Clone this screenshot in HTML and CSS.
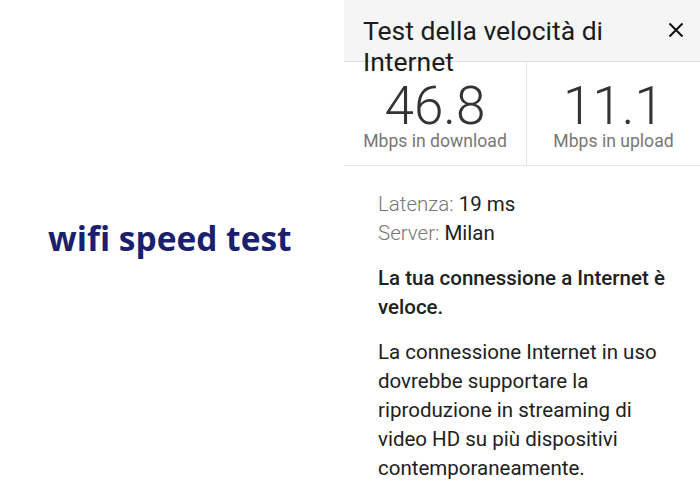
FILE: index.html
```html
<!DOCTYPE html>
<html lang="it">
<head>
  <meta charset="UTF-8">
  <title>Test della velocità di Internet</title>
  <link rel="stylesheet" href="styles.css">
</head>
<body>
  <div class="page">
    <div class="brand">wifi speed test</div>

    <div class="panel">
      <div class="panel-head">
        <h1 class="title">Test della velocità di Internet</h1>
        <button class="close" aria-label="Chiudi">
          <svg width="16" height="16" viewBox="0 0 16 16">
            <path d="M1.5 1.5 L14.5 14.5 M14.5 1.5 L1.5 14.5" stroke="#111" stroke-width="2" fill="none"/>
          </svg>
        </button>
      </div>

      <div class="stats">
        <div class="stat stat-down">
          <div class="stat-num">46.8</div>
          <div class="stat-label">Mbps in download</div>
        </div>
        <div class="stat">
          <div class="stat-num">11.1</div>
          <div class="stat-label">Mbps in upload</div>
        </div>
      </div>

      <div class="details">
        <div class="info"><span class="key">Latenza:</span> 19 ms</div>
        <div class="info"><span class="key">Server:</span> Milan</div>
        <p class="verdict">La tua connessione a Internet è veloce.</p>
        <p class="desc">La connessione Internet in uso dovrebbe supportare la riproduzione in streaming di video HD su più dispositivi contemporaneamente.</p>
      </div>
    </div>
  </div>
</body>
</html>
```

FILE: styles.css
```css
body {
  margin: 0;
  background: #fff;
  font-family: Roboto, "Noto Sans", sans-serif;
  color: #212121;
}

.page {
  display: flex;
  width: 700px;
  height: 500px;
  overflow: hidden;
}

.brand {
  width: 344px;
  padding-left: 48px;
  box-sizing: border-box;
  display: flex;
  align-items: center;
  padding-bottom: 24px;
  font-family: "Open Sans", sans-serif;
  font-weight: 700;
  font-size: 33.5px;
  color: #1b1f6d;
}

.panel {
  flex: 1;
  display: flex;
  flex-direction: column;
}

.panel-head {
  height: 61px;
  background: #f5f5f5;
  border-bottom: 1px solid #dcdcdc;
  display: flex;
  justify-content: space-between;
  align-items: flex-start;
  padding: 0 16px 0 19px;
}

.title {
  margin: 15px 0 0;
  width: 290px;
  font-size: 26.5px;
  font-weight: 400;
  line-height: 31px;
  color: #1c1c1c;
}

.close {
  margin-top: 22px;
  padding: 0;
  border: none;
  background: none;
  width: 16px;
  height: 16px;
}

.stats {
  display: flex;
  height: 103px;
  border-bottom: 1px solid #e6e6e6;
}

.stat {
  flex: 1;
  display: flex;
  flex-direction: column;
  align-items: center;
  padding-top: 18px;
}

.stat-down {
  flex: 0 0 182px;
}

.stat + .stat {
  border-left: 1px solid #e6e6e6;
}

.stat-num {
  font-size: 53px;
  font-weight: 300;
  line-height: 52px;
  color: #333;
}

.stat-label {
  font-size: 17.6px;
  color: #777;
  line-height: 18px;
}

.details {
  padding: 24px 20px 0 34px;
  font-size: 20.5px;
  line-height: 29px;
}

.key {
  font-weight: 300;
  color: #777;
}

.verdict {
  margin: 16px 0 0;
  font-weight: 500;
}

.desc {
  margin: 16px 0 0;
}
```
